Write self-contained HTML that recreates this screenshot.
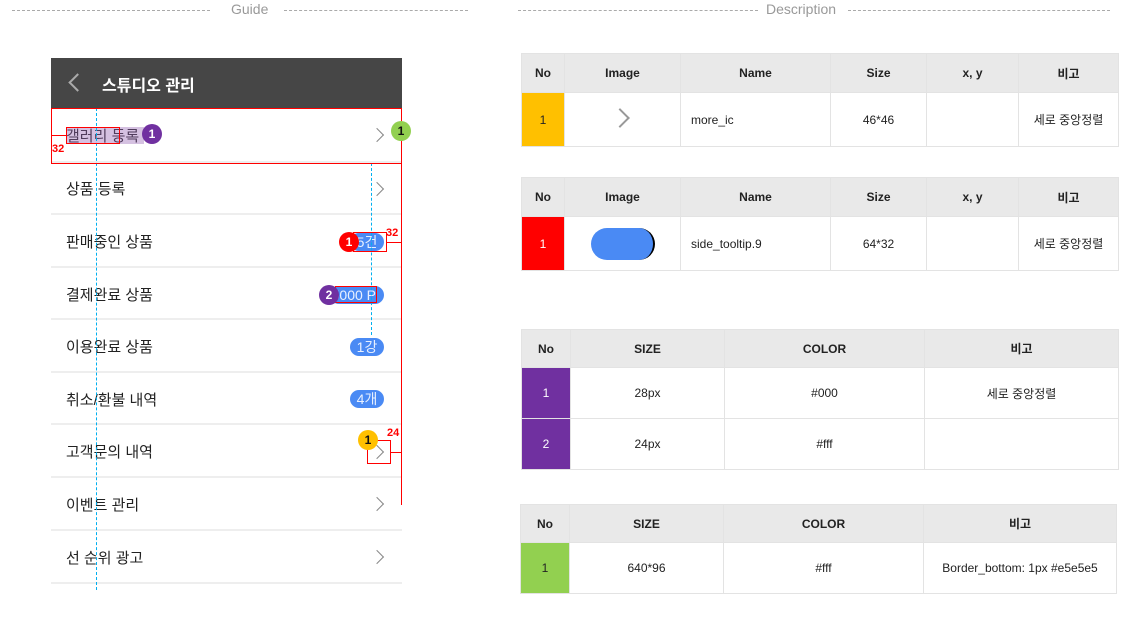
<!DOCTYPE html>
<html><head><meta charset="utf-8"><style>
*{margin:0;padding:0;box-sizing:border-box}
body{width:1133px;height:618px;background:#fff;position:relative;overflow:hidden;font-family:"Liberation Sans","Noto Sans CJK KR",sans-serif;color:#222}
.a{position:absolute}
.dash{position:absolute;top:10px;border-top:1px dashed #aaa;height:0}
.ttl{position:absolute;top:1px;font-size:14px;color:#999}
.row{position:absolute;left:51px;width:351px;border-bottom:2px solid #eeeeee;font-size:15px;color:#222}
.row span.t{position:absolute;left:15px}
.chev{position:absolute;left:321px;width:10px;height:10px;border-right:1.5px solid #888;border-top:1.5px solid #888;transform:rotate(45deg)}
.pill{position:absolute;background:#4a8af4;color:#e8f0ff;font-size:14px;border-radius:9px;height:18px;line-height:18px;text-align:center;overflow:hidden;white-space:nowrap}
.circ{position:absolute;width:20px;height:20px;border-radius:50%;color:#fff;font-size:12px;font-weight:bold;text-align:center;line-height:20px;z-index:6}
table{position:absolute;border-collapse:collapse;font-size:12px;table-layout:fixed}
td{border:1px solid #e3e3e3;text-align:center;color:#222}
tr.h td{background:#e9e9e9;font-weight:bold}
.rl{position:absolute;background:#ff0000;z-index:5}
.rb{position:absolute;border:1px solid #ff0000;z-index:5}
.rn{position:absolute;color:#f00;font-size:11px;font-weight:bold;z-index:5}
.bd{position:absolute;border-left:1px dashed #00b0f0;z-index:4}
</style></head><body>
<div class="dash" style="left:12px;width:198px"></div><div class="ttl" style="left:231px">Guide</div><div class="dash" style="left:284px;width:184px"></div>
<div class="dash" style="left:518px;width:240px"></div><div class="ttl" style="left:766px">Description</div><div class="dash" style="left:848px;width:262px"></div>

<div class="a" style="left:51px;top:58px;width:351px;height:50px;background:#464646"></div>
<div class="a" style="left:71px;top:76px;width:13px;height:13px;border-left:2px solid #aaa;border-bottom:2px solid #aaa;transform:rotate(45deg)"></div>
<div class="a" style="left:102px;top:72px;color:#fff;font-size:16px;font-weight:bold">스튜디오 관리</div>

<div class="row" style="top:108px;height:55px"><span class="t" style="top:17px">갤러리 등록</span><div class="chev" style="top:22px"></div></div>
<div class="row" style="top:163px;height:52px"><span class="t" style="top:15px">상품 등록</span><div class="chev" style="top:21px"></div></div>
<div class="row" style="top:215px;height:53px"><span class="t" style="top:16px">판매중인 상품</span></div>
<div class="row" style="top:268px;height:52px"><span class="t" style="top:16px">결제완료 상품</span></div>
<div class="row" style="top:320px;height:53px"><span class="t" style="top:16px">이용완료 상품</span></div>
<div class="row" style="top:373px;height:52px"><span class="t" style="top:16px">취소/환불 내역</span></div>
<div class="row" style="top:425px;height:53px"><span class="t" style="top:16px">고객문의 내역</span><div class="chev" style="top:22px"></div></div>
<div class="row" style="top:478px;height:53px"><span class="t" style="top:16px">이벤트 관리</span><div class="chev" style="top:21px"></div></div>
<div class="row" style="top:531px;height:53px"><span class="t" style="top:16px">선 순위 광고</span><div class="chev" style="top:21px"></div></div>

<div class="pill" style="left:350px;top:233px;width:34px">5건</div>
<div class="pill" style="left:330px;top:286px;width:54px;text-align:right;padding-right:8px">5000 P</div>
<div class="pill" style="left:350px;top:338px;width:34px">1강</div>
<div class="pill" style="left:350px;top:390px;width:34px">4개</div>

<div class="a" style="left:66px;top:127px;width:78px;height:17px;background:rgba(150,100,180,.4);z-index:3"></div>
<div class="rb" style="left:66px;top:127px;width:54px;height:17px"></div>
<div class="rb" style="left:51px;top:108px;width:351px;height:56px"></div>
<div class="rl" style="left:401px;top:108px;width:1px;height:397px"></div>
<div class="rl" style="left:51px;top:135px;width:15px;height:1px"></div>
<div class="rn" style="left:52px;top:143px">32</div>
<div class="rb" style="left:353px;top:232px;width:34px;height:20px"></div>
<div class="rl" style="left:387px;top:242px;width:14px;height:1px"></div>
<div class="rn" style="left:386px;top:227px">32</div>
<div class="rb" style="left:335px;top:286px;width:42px;height:17px"></div>
<div class="rb" style="left:367px;top:440px;width:24px;height:24px"></div>
<div class="rl" style="left:391px;top:452px;width:10px;height:1px"></div>
<div class="rn" style="left:387px;top:427px">24</div>

<div class="bd" style="left:96px;top:108px;height:482px"></div>
<div class="bd" style="left:371px;top:163px;height:172px"></div>

<div class="circ" style="left:142px;top:124px;background:#7030a0">1</div>
<div class="circ" style="left:391px;top:121px;background:#92d050;color:#111">1</div>
<div class="circ" style="left:339px;top:232px;background:#f00">1</div>
<div class="circ" style="left:319px;top:285px;background:#7030a0">2</div>
<div class="circ" style="left:358px;top:430px;background:#ffc000;color:#111">1</div>

<table style="left:521px;top:53px;width:598px"><colgroup><col style="width:43px"><col style="width:116px"><col style="width:150px"><col style="width:96px"><col style="width:92px"><col></colgroup>
<tr class="h" style="height:39px"><td>No</td><td>Image</td><td>Name</td><td>Size</td><td>x, y</td><td>비고</td></tr>
<tr style="height:54px"><td style="background:#ffc000">1</td><td><span style="display:inline-block;width:14px;height:14px;border-right:2px solid #999;border-top:2px solid #999;transform:rotate(45deg);margin-right:6px"></span></td><td style="text-align:left;padding-left:10px">more_ic</td><td>46*46</td><td></td><td>세로 중앙정렬</td></tr></table>

<table style="left:521px;top:177px;width:598px"><colgroup><col style="width:43px"><col style="width:116px"><col style="width:150px"><col style="width:96px"><col style="width:92px"><col></colgroup>
<tr class="h" style="height:39px"><td>No</td><td>Image</td><td>Name</td><td>Size</td><td>x, y</td><td>비고</td></tr>
<tr style="height:54px"><td style="background:#f00;color:#fff">1</td><td><span style="display:inline-block;width:64px;height:32px;border-radius:16px;background:#4a8af4;vertical-align:middle;border-right:2px solid #000"></span></td><td style="text-align:left;padding-left:10px">side_tooltip.9</td><td>64*32</td><td></td><td>세로 중앙정렬</td></tr></table>

<table style="left:521px;top:329px;width:598px"><colgroup><col style="width:49px"><col style="width:154px"><col style="width:200px"><col></colgroup>
<tr class="h" style="height:38px"><td>No</td><td>SIZE</td><td>COLOR</td><td>비고</td></tr>
<tr style="height:51px"><td style="background:#7030a0;color:#fff">1</td><td>28px</td><td>#000</td><td>세로 중앙정렬</td></tr>
<tr style="height:51px"><td style="background:#7030a0;color:#fff">2</td><td>24px</td><td>#fff</td><td></td></tr></table>

<table style="left:520px;top:504px;width:597px"><colgroup><col style="width:49px"><col style="width:154px"><col style="width:200px"><col></colgroup>
<tr class="h" style="height:38px"><td>No</td><td>SIZE</td><td>COLOR</td><td>비고</td></tr>
<tr style="height:51px"><td style="background:#92d050">1</td><td>640*96</td><td>#fff</td><td>Border_bottom: 1px #e5e5e5</td></tr></table>
</body></html>
